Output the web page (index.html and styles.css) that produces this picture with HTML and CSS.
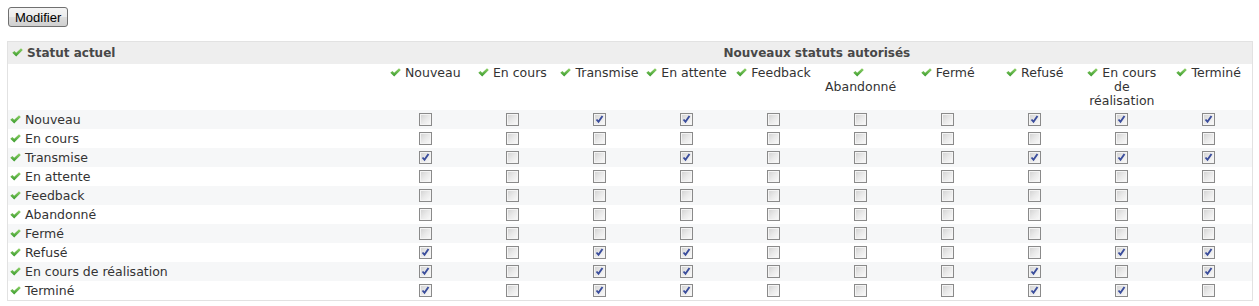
FILE: index.html
```html
<!DOCTYPE html>
<html lang="fr">
<head>
<meta charset="utf-8">
<title>Workflow</title>
<link rel="stylesheet" href="styles.css">
</head>
<body>
<form class="page">
  <div class="actions"><button type="button" class="btn">Modifier</button></div>
  <table class="workflow">
    <colgroup>
      <col class="c-first">
      <col class="c-st"><col class="c-st"><col class="c-st"><col class="c-st"><col class="c-st">
      <col class="c-st"><col class="c-st"><col class="c-st"><col class="c-st"><col class="c-st">
    </colgroup>
    <thead>
      <tr class="head">
        <th class="first"><span class="ck"></span>Statut actuel</th>
        <th colspan="10" class="center">Nouveaux statuts autorisés</th>
      </tr>
      <tr class="sub">
        <td></td>
        <td><span class="ck"></span>Nouveau</td>
        <td><span class="ck"></span>En cours</td>
        <td><span class="ck"></span>Transmise</td>
        <td><span class="ck"></span>En attente</td>
        <td><span class="ck"></span>Feedback</td>
        <td><span class="ck"></span>Abandonné</td>
        <td><span class="ck"></span>Fermé</td>
        <td><span class="ck"></span>Refusé</td>
        <td><span class="ck"></span>En cours de réalisation</td>
        <td><span class="ck"></span>Terminé</td>
      </tr>
    </thead>
    <tbody id="rows"></tbody>
  </table>
</form>
<script src="app.js"></script>
</body>
</html>
```
FILE: app.js
```js
var names = ["Nouveau","En cours","Transmise","En attente","Feedback","Abandonné","Fermé","Refusé","En cours de réalisation","Terminé"];
var data = [
  "0011000111",
  "0000000000",
  "1001000111",
  "0000000000",
  "0000000000",
  "0000000000",
  "0000000000",
  "1011000011",
  "1011000101",
  "1011000110"
];
var tb = document.getElementById("rows");
names.forEach(function (n, i) {
  var tr = document.createElement("tr");
  tr.className = i % 2 === 0 ? "odd" : "even";
  var th = document.createElement("td");
  th.className = "name";
  th.innerHTML = '<span class="ck"></span>' + n;
  tr.appendChild(th);
  for (var j = 0; j < 10; j++) {
    var td = document.createElement("td");
    td.className = "cell";
    var cb = document.createElement("input");
    cb.type = "checkbox";
    cb.className = "cb";
    if (data[i][j] === "1") cb.checked = true;
    td.appendChild(cb);
    tr.appendChild(td);
  }
  tb.appendChild(tr);
});
```
FILE: styles.css
```css
html, body { margin: 0; padding: 0; background: #fff; }
body {
  font-family: "DejaVu Sans", Verdana, sans-serif;
  font-size: 12.5px;
  color: #333;
}
.page {
  display: flex;
  flex-direction: column;
  padding: 7px 7px 0 7px;
  gap: 14px;
}
.actions { padding-left: 1px; }
.btn {
  font-family: "Liberation Sans", Arial, sans-serif;
  font-size: 13px;
  color: #000;
  height: 20px;
  padding: 0 6px;
  border: 1px solid #707070;
  border-radius: 3px;
  background: linear-gradient(#f4f4f4 0%, #ebebeb 50%, #dddddd 51%, #cfcfcf 100%);
  line-height: 17px;
}
.workflow {
  width: 1246px;
  table-layout: fixed;
  border-collapse: collapse;
  border: 1px solid #e2e2e2;
}
.c-first { width: 374px; }
.c-st { width: 87px; }
.workflow th, .workflow td { padding: 0; }
.head th {
  background: #eeeeee;
  height: 22px;
  line-height: 16px;
  font-weight: bold;
  color: #484848;
  font-size: 12px;
  text-align: left;
  padding-left: 4px;
  vertical-align: middle;
}
.head th.center { text-align: center; padding-left: 0; }
.sub td {
  height: 44px;
  vertical-align: top;
  text-align: center;
  line-height: 14px;
  padding: 2px 2px 0 2px;
  color: #333;
}
.ck {
  display: inline-block;
  width: 11px;
  height: 9px;
  margin-right: 4px;
  vertical-align: 0;
  background: url("data:image/svg+xml;utf8,<svg xmlns='http://www.w3.org/2000/svg' width='11' height='9' viewBox='0 0 11 9'><defs><linearGradient id='g' x1='0' y1='0' x2='0' y2='1'><stop offset='0' stop-color='%238fd168'/><stop offset='1' stop-color='%23389a2c'/></linearGradient></defs><path d='M0.3 4.8 L2.4 2.9 L4.2 4.7 L9 0.2 L10.8 2 L4.2 8.6 Z' fill='url(%23g)'/></svg>") no-repeat;
}
.workflow tbody tr { height: 19px; }
.workflow tbody tr.odd { background: #f6f7f8; }
.workflow tbody tr.even { background: #fff; }
.workflow tbody td { height: 19px; line-height: 17px; }
.name { padding-left: 2px !important; white-space: nowrap; }
.name .ck { margin-right: 4px; }
.cell { text-align: center; vertical-align: middle; }
.cb {
  appearance: none;
  -webkit-appearance: none;
  display: inline-block;
  width: 13px;
  height: 13px;
  margin: 2px 0 0 0;
  vertical-align: top;
  border: 1px solid #8a8a8a;
  box-shadow: inset 0 0 0 1px #f4f4f4;
  background: linear-gradient(135deg, #d0d0d0 0%, #e9e9e9 50%, #fbfbfb 100%);
}
.cb:checked {
  background:
    url("data:image/svg+xml;utf8,<svg xmlns='http://www.w3.org/2000/svg' width='11' height='11' viewBox='0 0 11 11'><path d='M2.5 5.5 L4.5 7.8 L8.5 2' fill='none' stroke='%233a4d9c' stroke-width='1.9'/></svg>") no-repeat 0 0,
    linear-gradient(135deg, #d0d0d0 0%, #e9e9e9 50%, #fbfbfb 100%);
}
```
